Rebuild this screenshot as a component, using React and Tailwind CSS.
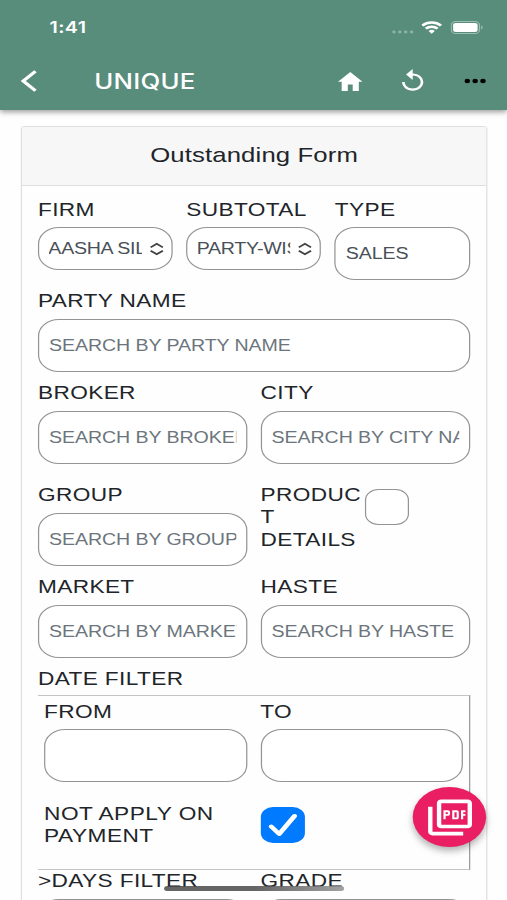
import { useState } from 'react';
import { MdOutlinePictureAsPdf, MdReplay } from 'react-icons/md';

const boxClass = 'w-full rounded-[17px] border border-[#949494] bg-white text-[#495057] placeholder:text-[#6c757d] outline-none';
const labelClass = 'block h-[22px] text-[18.5px] tracking-[0.3px] text-[#212529] whitespace-nowrap';

// label with a rounded text input under it, low sets the label closer to the box
function Field({ label, placeholder = '', value = '', low = false }) {
  const [text, setText] = useState(value);
  return (
    <label className="block min-w-0 flex-1">
      <span className={`${labelClass} ${low ? 'leading-[23px]' : 'leading-[22px]'}`}>{label}</span>
      <input
        type="text"
        value={text}
        onChange={(e) => setText(e.target.value)}
        placeholder={placeholder}
        className={`${boxClass} mt-[7px] block h-[53px] px-[8px] text-[16px] tracking-[-0.07px]`}
      />
    </label>
  );
}

// label with a shorter select box
function SelectField({ label, value }) {
  return (
    <div className="min-w-0 flex-1">
      <span className={`${labelClass} leading-[23px]`}>{label}</span>
      <button type="button" className={`${boxClass} mt-[7px] flex h-[43px] items-center pl-[7.5px] text-[16px] tracking-[-0.25px]`}>
        <span className="w-[76.5px] overflow-hidden whitespace-nowrap text-left">{value}</span>
        <svg viewBox="0 0 12 14" className="ml-[5.5px] h-[14px] w-[12px] shrink-0" fill="none" stroke="#444" strokeWidth="1.7">
          <path d="M1 5.4 6 1.9l5 3.5M1 8.8l5 3.5 5-3.5" />
        </svg>
      </button>
    </div>
  );
}

function StatusBar() {
  return (
    <div className="flex h-[54px] items-center justify-between pl-[40.5px] pr-[19.5px] text-white">
      <span className="text-[16px] font-semibold leading-none tracking-[0.3px]">1:41</span>
      <div className="flex items-center gap-[6.5px]">
        <svg viewBox="0 0 18 4" className="mt-[9px] h-[4px] w-[18px]" fill="#8fb5a8">
          <circle cx="1.7" cy="2" r="1.4" />
          <circle cx="6.5" cy="2" r="1.4" />
          <circle cx="11.3" cy="2" r="1.4" />
          <circle cx="16.1" cy="2" r="1.4" />
        </svg>
        <svg viewBox="0 0 18 13" className="h-[13px] w-[17px]" fill="none" stroke="#fff" strokeWidth="2.6">
          <path d="M.9 4.6a11.6 11.6 0 0 1 16.2 0" />
          <path d="M3.9 7.8a7.2 7.2 0 0 1 10.2 0" />
          <path d="M9 13 6.3 10.3a3.8 3.8 0 0 1 5.4 0Z" fill="#fff" stroke="none" />
        </svg>
        <svg viewBox="0 0 27 13" className="h-[13px] w-[27px]">
          <rect x=".5" y=".5" width="23" height="12" rx="3.6" fill="none" stroke="#9dbfb2" />
          <rect x="2" y="2" width="20" height="9" rx="2.2" fill="#fff" />
          <path d="M25 4.5c1.6.6 1.6 3.4 0 4Z" fill="#9dbfb2" />
        </svg>
      </div>
    </div>
  );
}

function Header() {
  return (
    <header className="relative h-[110px] bg-[#588d7c] font-[Inter,sans-serif] shadow-[0_2px_5px_rgba(0,0,0,0.4)]">
      <StatusBar />
      <div className="flex h-[54px] items-center pl-[17px] pr-[17px] text-white">
        <svg viewBox="0 0 13 22" className="h-[22px] w-[13px]" fill="none" stroke="#fff" strokeWidth="3">
          <path d="M12 1.2 2 11l10 9.8" />
        </svg>
        <h1 className="ml-[47px] flex-1 text-[21px] font-medium leading-none tracking-[0.2px]">UNIQUE</h1>
        <svg viewBox="0 0 20 19" className="h-[19px] w-[20px]" fill="#fff">
          <path d="M10 0 0 9.8h3V19h5v-6.6h4V19h5V9.8h3Z" />
        </svg>
        <MdReplay className="ml-[28px] size-[26px]" />
        <svg viewBox="0 0 18 6" className="ml-[29px] h-[6px] w-[18px]" fill="#000">
          <circle cx="2.6" cy="3" r="2.2" />
          <circle cx="9" cy="3" r="2.2" />
          <circle cx="15.4" cy="3" r="2.2" />
        </svg>
      </div>
    </header>
  );
}

export default function App() {
  const [showDetails, setShowDetails] = useState(false);
  const [notOnPayment, setNotOnPayment] = useState(true);

  return (
    <div className="h-[900px] w-[507px] overflow-hidden bg-[#fefefe]">
      {/* 414px wide phone layout, widened to the window */}
      <div className="relative h-[900px] w-[414px] origin-top-left scale-x-[1.2246] overflow-hidden font-['Liberation_Sans',Arial,sans-serif]">
        <Header />

        <main className="ml-[17px] mr-[16px] mt-[16px] h-[800px] rounded-[3px] border border-[#dfdfdf]">
          <h2 className="h-[59px] border-b border-[#dfdfdf] bg-[#f7f7f7] text-center text-[21px] leading-[56px] tracking-[0.1px] text-[#212529]">
            Outstanding Form
          </h2>

          <div className="pl-[13px] pr-[13.5px] pt-[12px]">
            <div className="flex gap-[11px]">
              <SelectField label="FIRM" value="AASHA SILK" />
              <SelectField label="SUBTOTAL" value="PARTY-WISE" />
              <Field label="TYPE" value="SALES" low />
            </div>

            <div className="mt-[10px] flex">
              <Field label="PARTY NAME" placeholder="SEARCH BY PARTY NAME" />
            </div>

            <div className="mt-[10px] flex gap-[11px]">
              <Field label="BROKER" placeholder="SEARCH BY BROKER" />
              <Field label="CITY" placeholder="SEARCH BY CITY NAME" />
            </div>

            <div className="mt-[20px] flex gap-[11px]">
              <Field label="GROUP" placeholder="SEARCH BY GROUP" />
              <div className="flex min-w-0 flex-1 items-start">
                <span className="w-[85px] break-words text-[18.5px] leading-[22.4px] tracking-[0.3px] text-[#212529]">PRODUCT DETAILS</span>
                <button
                  type="button"
                  aria-label="Product details"
                  onClick={() => setShowDetails(!showDetails)}
                  className={`mt-[5px] size-[36px] rounded-[11px] border border-[#949494] ${showDetails ? 'bg-[#007aff]' : 'bg-white'}`}
                />
              </div>
            </div>

            <div className="mt-[10px] flex gap-[11px]">
              <Field label="MARKET" placeholder="SEARCH BY MARKET" />
              <Field label="HASTE" placeholder="SEARCH BY HASTE" />
            </div>

            <span className={`${labelClass} mt-[9px] leading-[23px]`}>DATE FILTER</span>

            {/* date range box */}
            <section className="mt-[6px] h-[175px] border-y border-r-[1.5px] border-y-[#c4c4c4] border-r-[#999] pl-[5px] pr-[4.5px] pt-[4px]">
              <div className="flex gap-[11px]">
                <Field label="FROM" low />
                <Field label="TO" low />
              </div>
              <div className="mt-[20px] flex gap-[11px]">
                <span className="flex-1 pt-[1px] text-[18.5px] leading-[22.3px] tracking-[0.4px] text-[#212529]">NOT APPLY ON PAYMENT</span>
                <div className="flex-1">
                  <button
                    type="button"
                    aria-label="Not apply on payment"
                    onClick={() => setNotOnPayment(!notOnPayment)}
                    className={`mt-[5px] flex size-[36px] items-center justify-center rounded-[10px] ${notOnPayment ? 'bg-[#007aff]' : 'border border-[#949494]'}`}
                  >
                    {notOnPayment && (
                      <svg viewBox="0 0 24 24" className="size-[24px]" fill="none" stroke="#fff" strokeWidth="4" strokeLinecap="round" strokeLinejoin="round">
                        <path d="M2.5 13.5 9 21 21.5 3" />
                      </svg>
                    )}
                  </button>
                </div>
              </div>
            </section>

            <div className="flex gap-[11px]">
              <Field label=">DAYS FILTER" />
              <Field label="GRADE" />
            </div>
          </div>
        </main>

        {/* floating pdf button */}
        <button
          type="button"
          aria-label="Export PDF"
          className="absolute left-[337px] top-[787px] flex size-[60px] items-center justify-center rounded-full bg-[#e91e63] text-white shadow-[0_4px_7px_rgba(0,0,0,0.3)]"
        >
          <MdOutlinePictureAsPdf className="size-[43px]" />
        </button>

        {/* home indicator */}
        <div className="absolute left-[134px] top-[886px] h-[5px] w-[147px] rounded-full bg-linear-to-r from-[#4a4a4a]/85 via-[#4a4a4a]/85 to-[#999999]/90" />
      </div>
    </div>
  );
}
